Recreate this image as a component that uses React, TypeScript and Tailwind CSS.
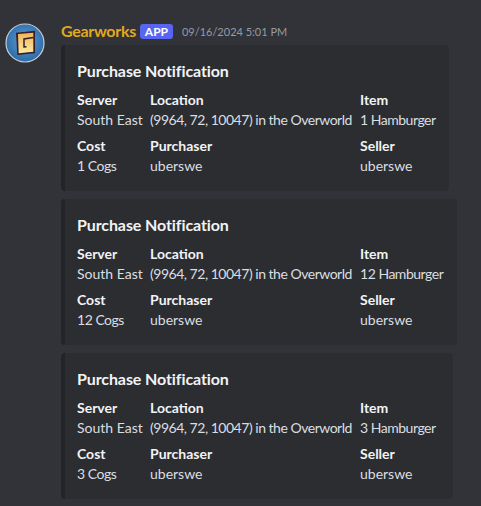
const FONT = "font-['Lato','Liberation_Sans',sans-serif]";

function Field({ label, value, tight }: { label: string; value: string; tight?: boolean }) {
  return (
    <div className="min-w-0">
      <div className="text-[14px] leading-[18px] font-bold text-[#f2f3f5]">{label}</div>
      <div className={`text-[14px] leading-[18px] mt-[2px] text-[#dbdee1] whitespace-nowrap ${tight ? "tracking-[-0.48px]" : ""}`}>{value}</div>
    </div>
  );
}

function Embed({ width, item, cost }: { width: string; item: string; cost: string }) {
  return (
    <div className={`${width} h-[146px] bg-[#2b2d31] rounded-[4px] border-l-4 border-[#232428] pt-[15px] pl-[12px]`}>
      <div className="text-[16px] leading-[22px] font-bold text-[#f2f3f5] tracking-[-0.1px]">Purchase Notification</div>
      <div className="grid grid-cols-[73px_210px_1fr] gap-y-[8px] mt-[9px]">
        <Field label="Server" value="South East" />
        <Field label="Location" value="(9964, 72, 10047) in the Overworld" tight />
        <Field label="Item" value={item} tight />
        <Field label="Cost" value={cost} tight />
        <Field label="Purchaser" value="uberswe" />
        <Field label="Seller" value="uberswe" />
      </div>
    </div>
  );
}

function Avatar() {
  return (
    <svg width="40" height="40" viewBox="0 0 40 40" className="shrink-0">
      <defs>
        <radialGradient id="bg" cx="50%" cy="45%" r="55%">
          <stop offset="0%" stopColor="#5f9fd6" />
          <stop offset="100%" stopColor="#2a6aa8" />
        </radialGradient>
        <linearGradient id="fg" x1="0" y1="0" x2="0" y2="1">
          <stop offset="0%" stopColor="#eeb655" />
          <stop offset="100%" stopColor="#fdeaa0" />
        </linearGradient>
      </defs>
      <circle cx="20" cy="20" r="19" fill="url(#bg)" stroke="#c6ccd2" strokeWidth="1.2" />
      <path d="M11 9.700 L30 7.700 L30 30.300 L12.300 32 Z" fill="#3a1c2c" />
      <path d="M13 11 L28.300 9.700 L28.300 28.700 L13.700 30.300 Z" fill="url(#fg)" />
      <path d="M28.500 14.500 L19 16 L19 24 L21.500 23.700" fill="none" stroke="#3a1c2c" strokeWidth="1.500" />
    </svg>
  );
}

export default function App() {
  return (
    <div className={`${FONT} w-[481px] h-[506px] bg-[#313338] overflow-hidden pl-[5px] pt-[23px] flex gap-[16px]`}>
      <Avatar />
      <div className="flex-1 min-w-0">
        <div className="flex items-center h-[22px] -mt-[3px]">
          <span className="text-[16px] leading-[22px] font-bold text-[#e0a91f] tracking-[-0.3px]">Gearworks</span>
          <span className="ml-[4px] h-[15px] w-[33px] text-center rounded-[3px] bg-[#5865f2] text-white text-[12px] leading-[15px] font-bold">APP</span>
          <span className="ml-[9px] text-[11px] leading-[22px] text-[#949ba4] translate-y-[1px]">09/16/2024 5:01 PM</span>
        </div>
        <div className="flex flex-col gap-[8px] mt-[3px]">
          <Embed width="w-[388px]" item="1 Hamburger" cost="1 Cogs" />
          <Embed width="w-[396px]" item="12 Hamburger" cost="12 Cogs" />
          <Embed width="w-[392px]" item="3 Hamburger" cost="3 Cogs" />
        </div>
      </div>
    </div>
  );
}
